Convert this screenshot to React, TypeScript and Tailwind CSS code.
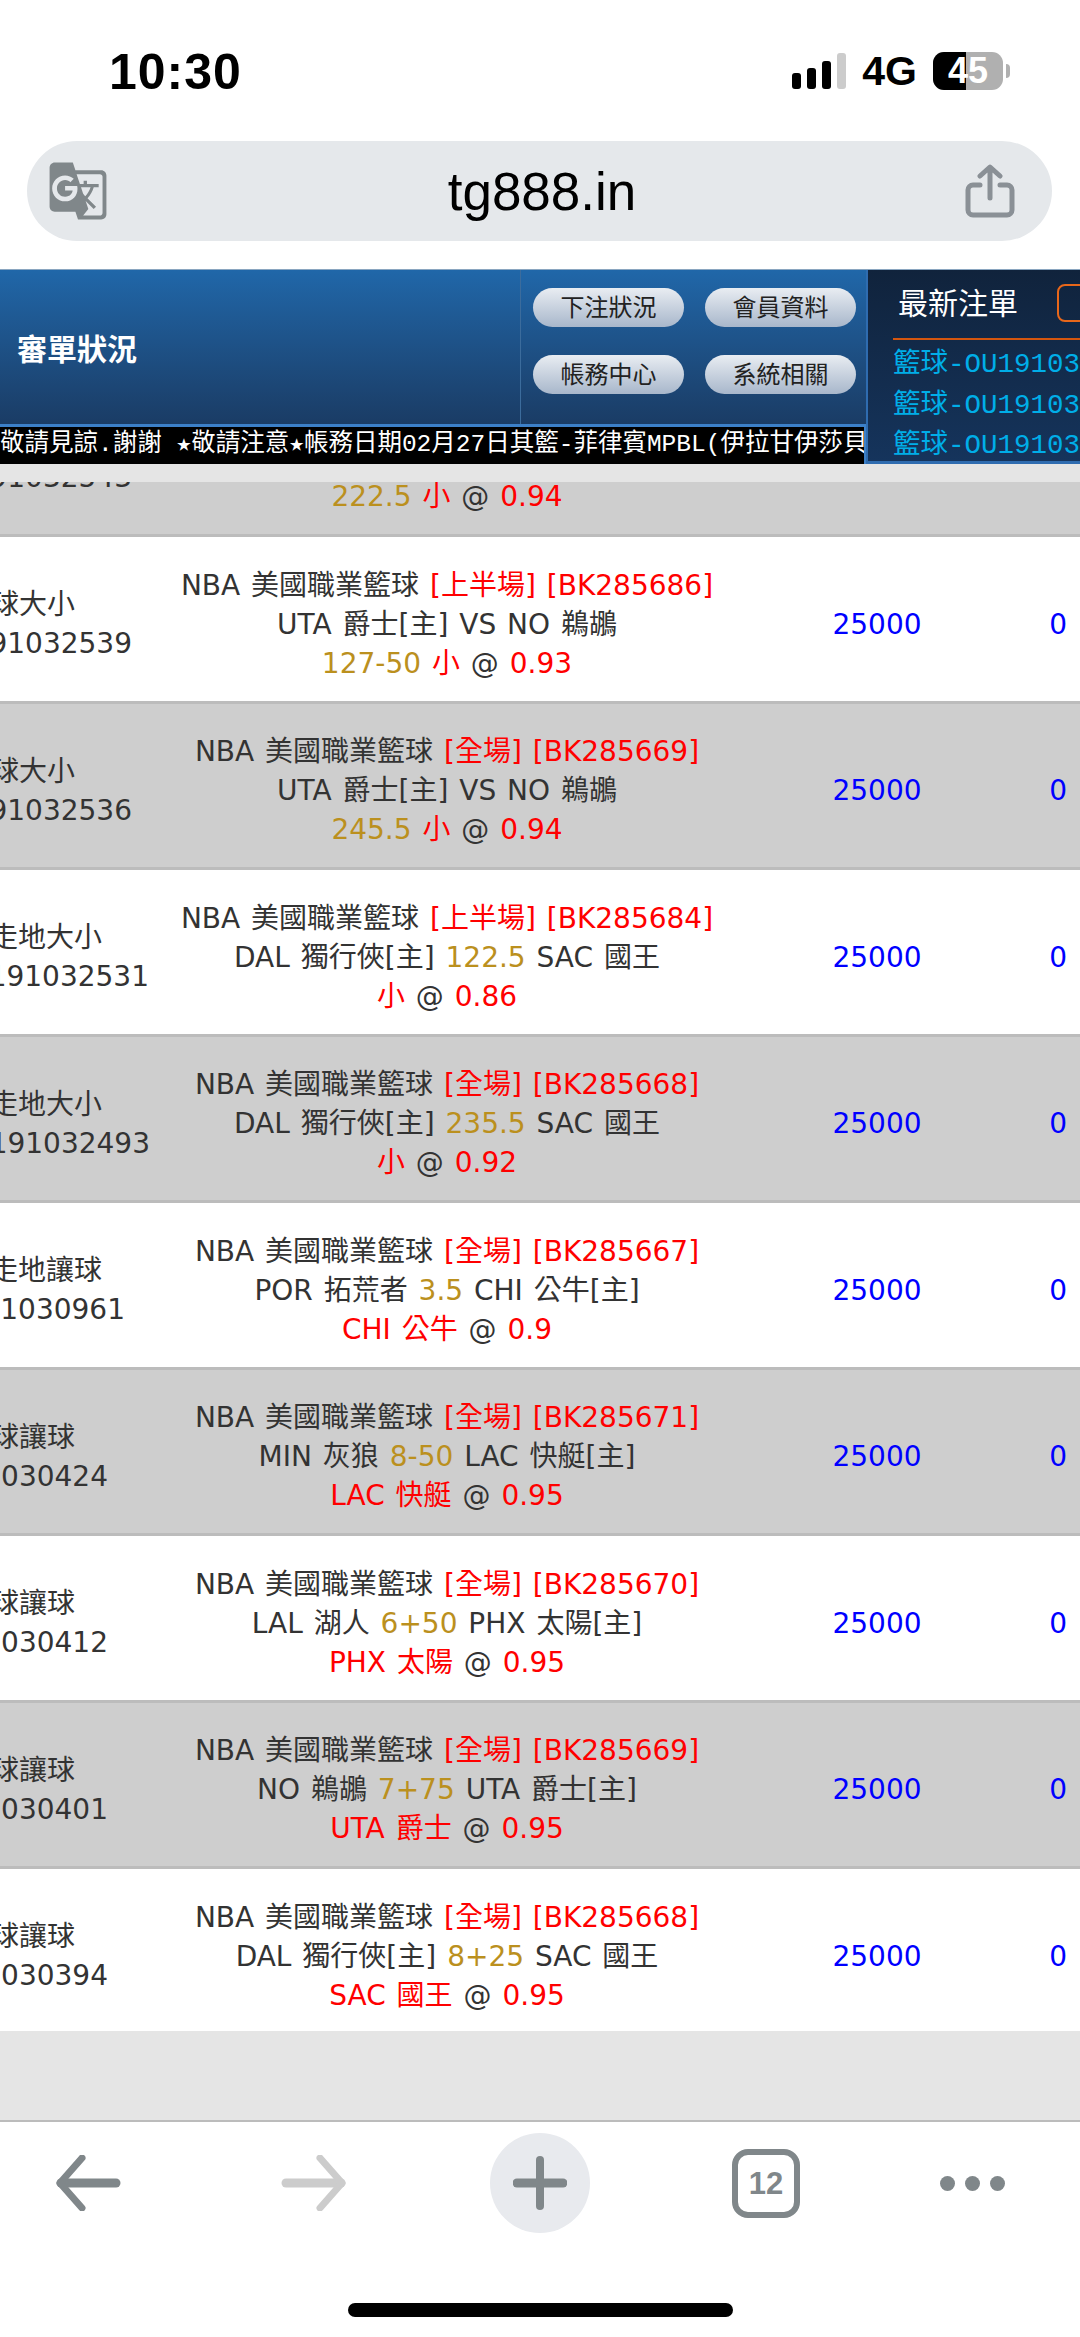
import type { ReactNode } from 'react'
import { MdGTranslate } from 'react-icons/md'

function Red({ children }: { children: ReactNode }) {
  return <span className="text-[#ff0000]">{children}</span>
}

function Gold({ children }: { children: ReactNode }) {
  return <span className="text-[#bb901e]">{children}</span>
}

interface Bet {
  kind: string
  kindPad: string
  id: string
  idPad: string
  period: string
  code: string
  match: ReactNode
  pick: ReactNode
}

const daXiao = 'pr-[75px]'
const zouDi = 'pr-[48px]'
const rangQiu = 'pr-[75px]'

const bets: Bet[] = [
  {
    kind: '籃球大小', kindPad: daXiao, id: '191032543', idPad: 'pr-[18px]', period: '全場', code: 'BK285670',
    match: 'UTA 爵士[主] VS NO 鵜鶘',
    pick: <><Gold>222.5</Gold> <Red>小</Red> @ <Red>0.94</Red></>,
  },
  {
    kind: '籃球大小', kindPad: daXiao, id: '191032539', idPad: 'pr-[18px]', period: '上半場', code: 'BK285686',
    match: 'UTA 爵士[主] VS NO 鵜鶘',
    pick: <><Gold>127-50</Gold> <Red>小</Red> @ <Red>0.93</Red></>,
  },
  {
    kind: '籃球大小', kindPad: daXiao, id: '191032536', idPad: 'pr-[18px]', period: '全場', code: 'BK285669',
    match: 'UTA 爵士[主] VS NO 鵜鶘',
    pick: <><Gold>245.5</Gold> <Red>小</Red> @ <Red>0.94</Red></>,
  },
  {
    kind: '籃球走地大小', kindPad: zouDi, id: 'OU191032531', idPad: 'pr-[1px]', period: '上半場', code: 'BK285684',
    match: <>DAL 獨行俠[主] <Gold>122.5</Gold> SAC 國王</>,
    pick: <><Red>小</Red> @ <Red>0.86</Red></>,
  },
  {
    kind: '籃球走地大小', kindPad: zouDi, id: 'OU191032493', idPad: 'pr-[0px]', period: '全場', code: 'BK285668',
    match: <>DAL 獨行俠[主] <Gold>235.5</Gold> SAC 國王</>,
    pick: <><Red>小</Red> @ <Red>0.92</Red></>,
  },
  {
    kind: '籃球走地讓球', kindPad: zouDi, id: 'R191030961', idPad: 'pr-[25px]', period: '全場', code: 'BK285667',
    match: <>POR 拓荒者 <Gold>3.5</Gold> CHI 公牛[主]</>,
    pick: <><Red>CHI 公牛</Red> @ <Red>0.9</Red></>,
  },
  {
    kind: '籃球讓球', kindPad: rangQiu, id: 'R191030424', idPad: 'pr-[42px]', period: '全場', code: 'BK285671',
    match: <>MIN 灰狼 <Gold>8-50</Gold> LAC 快艇[主]</>,
    pick: <><Red>LAC 快艇</Red> @ <Red>0.95</Red></>,
  },
  {
    kind: '籃球讓球', kindPad: rangQiu, id: 'R191030412', idPad: 'pr-[42px]', period: '全場', code: 'BK285670',
    match: <>LAL 湖人 <Gold>6+50</Gold> PHX 太陽[主]</>,
    pick: <><Red>PHX 太陽</Red> @ <Red>0.95</Red></>,
  },
  {
    kind: '籃球讓球', kindPad: rangQiu, id: 'R191030401', idPad: 'pr-[42px]', period: '全場', code: 'BK285669',
    match: <>NO 鵜鶘 <Gold>7+75</Gold> UTA 爵士[主]</>,
    pick: <><Red>UTA 爵士</Red> @ <Red>0.95</Red></>,
  },
  {
    kind: '籃球讓球', kindPad: rangQiu, id: 'R191030394', idPad: 'pr-[42px]', period: '全場', code: 'BK285668',
    match: <>DAL 獨行俠[主] <Gold>8+25</Gold> SAC 國王</>,
    pick: <><Red>SAC 國王</Red> @ <Red>0.95</Red></>,
  },
]

function BetRow({ bet, shaded }: { bet: Bet; shaded: boolean }) {
  return (
    <div
      className={`grid h-[166.5px] shrink-0 grid-cols-[150px_594px_266px_70px] border-b-[3px] border-[#bcbcbc] pt-[11px] text-[28px] leading-[39px] text-[#333] [word-spacing:2px] ${
        shaded ? 'bg-[#cecece]' : 'bg-white'
      }`}
    >
      <div className="flex flex-col items-end justify-center overflow-hidden whitespace-nowrap">
        <div className={bet.kindPad}>{bet.kind}</div>
        <div className={bet.idPad}>{bet.id}</div>
      </div>
      <div className="flex flex-col items-center justify-center whitespace-nowrap">
        <div>
          NBA 美國職業籃球 <Red>[{bet.period}] [{bet.code}]</Red>
        </div>
        <div>{bet.match}</div>
        <div>{bet.pick}</div>
      </div>
      <div className="flex items-center justify-center text-[#0000ff]">25000</div>
      <div className="flex items-center justify-end pr-[13px] text-[#0000ff]">0</div>
    </div>
  )
}

function NavButton({ label }: { label: string }) {
  return (
    <div className="flex h-[39px] w-[151px] items-center justify-center rounded-full bg-gradient-to-b from-[#e9edf2] to-[#a8b7cb] text-[24px] text-[#222]">
      {label}
    </div>
  )
}

function StatusBar() {
  return (
    <div className="flex h-[141px] shrink-0 items-start justify-between pl-[109px] pr-[70px] pt-[48px]">
      <div className="font-['Liberation_Sans',sans-serif] text-[50px] font-bold leading-[48px] tracking-[1px] text-black">
        10:30
      </div>
      <div className="flex items-center pt-[3px]">
        <div className="flex h-[36px] items-end gap-[6px]">
          <div className="h-[16px] w-[9px] rounded-[3px] bg-black" />
          <div className="h-[21px] w-[9px] rounded-[3px] bg-black" />
          <div className="h-[28px] w-[9px] rounded-[3px] bg-black" />
          <div className="h-[36px] w-[9px] rounded-[3px] bg-[#cccccc]" />
        </div>
        <div className="ml-[16px] font-['Liberation_Sans',sans-serif] text-[41px] font-bold leading-[40px] text-black">4G</div>
        <div className="relative ml-[16px] flex h-[38px] w-[70px] items-center justify-center overflow-hidden rounded-[11px] bg-[#b0b0b0] font-['Liberation_Sans',sans-serif] text-[36px] font-bold leading-none text-white">
          <div className="absolute inset-y-0 left-0 w-[33px] bg-black" />
          <span className="relative">45</span>
        </div>
        <div className="ml-[3px] h-[14px] w-[4px] rounded-r-full bg-[#b0b0b0]" />
      </div>
    </div>
  )
}

function AddressBar() {
  return (
    <div className="mx-[27px] flex h-[100px] w-[1025px] shrink-0 items-center rounded-[50px] bg-[#e5e8eb] pl-[20px] pr-[37px]">
      <MdGTranslate size={62} color="#80878a" />
      <div className="flex-1 pl-[10px] text-center font-['Liberation_Sans',sans-serif] text-[53px] leading-none text-black">
        tg888.in
      </div>
      <svg width="50" height="54" viewBox="0 0 50 54" fill="none" stroke="#8a9096" strokeWidth="5" strokeLinecap="round" strokeLinejoin="round">
        <path d="M15 21H8a5 5 0 0 0-5 5v20a5 5 0 0 0 5 5h34a5 5 0 0 0 5-5V26a5 5 0 0 0-5-5h-7" />
        <path d="M25 34V4M15 12l10-9 10 9" />
      </svg>
    </div>
  )
}

function SiteHeader() {
  return (
    <div className="flex h-[195px] shrink-0 border-t border-[#8aa6c0]">
      <div className="flex w-[866px] shrink-0 flex-col">
        <div className="flex flex-1 bg-gradient-to-b from-[#2067a9] to-[#1a3c65]">
          <div className="flex w-[521px] items-center border-r border-[#3c6c9c] pl-[17px] font-['Noto_Sans_CJK_TC',sans-serif] text-[30px] font-bold text-white">
            審單狀況
          </div>
          <div className="grid flex-1 grid-cols-[151px_151px] content-start gap-x-[21px] gap-y-[28px] pl-[12px] pt-[18px]">
            <NavButton label="下注狀況" />
            <NavButton label="會員資料" />
            <NavButton label="帳務中心" />
            <NavButton label="系統相關" />
          </div>
        </div>
        <div className="h-[40px] overflow-hidden whitespace-nowrap border-t-[3px] border-r-[2px] border-[#3c80c8] bg-black font-['Liberation_Mono','DejaVu_Sans_Mono','Noto_Sans_CJK_TC',monospace] text-[24.5px] leading-[36px] text-white">
          敬請見諒.謝謝 ★敬請注意★帳務日期02月27日其籃-菲律賓MPBL(伊拉甘伊莎貝拉)
        </div>
      </div>
      <div className="flex-1 overflow-hidden border-b-[3px] border-l-[2px] border-[#2f6cb0] bg-gradient-to-b from-[#10233c] to-[#15345c] pl-[25px]">
        <div className="flex h-[70px] items-center border-b-[2px] border-[#d4560f] pb-[7px]">
          <div className="shrink-0 whitespace-nowrap pl-[5px] font-['Noto_Sans_CJK_TC',sans-serif] text-[30px] leading-none text-white">最新注單</div>
          <div className="ml-[39px] mt-[5px] h-[38px] w-[60px] shrink-0 rounded-[8px] border-[2px] border-[#e8671a]" />
        </div>
        <div className="whitespace-nowrap pt-[5px] font-['Liberation_Mono','Noto_Sans_CJK_TC',monospace] text-[27.5px] leading-[40.5px] text-[#00aee8]">
          <div>籃球-OU191032543</div>
          <div>籃球-OU191032539</div>
          <div>籃球-OU191032536</div>
        </div>
      </div>
    </div>
  )
}

function Toolbar() {
  return (
    <div className="flex flex-1 flex-col border-t-[2px] border-[#bcbcbc] bg-white">
      <div className="flex h-[181px] shrink-0 justify-center">
        <div className="flex h-[122px] w-[226px] shrink-0 items-center justify-center">
          <svg width="66" height="56" viewBox="0 0 66 56" fill="none" stroke="#80878a" strokeLinecap="round" strokeLinejoin="round">
            <path d="M61 28H6" strokeWidth="9" />
            <path d="M27 3 5 28l22 25" strokeWidth="7" />
          </svg>
        </div>
        <div className="flex h-[122px] w-[226px] shrink-0 items-center justify-center">
          <svg width="66" height="56" viewBox="0 0 66 56" fill="none" stroke="#cccccc" strokeLinecap="round" strokeLinejoin="round">
            <path d="M5 28h55" strokeWidth="9" />
            <path d="m39 3 22 25-22 25" strokeWidth="7" />
          </svg>
        </div>
        <div className="flex h-[122px] w-[226px] shrink-0 items-center justify-center">
          <div className="flex h-[100px] w-[100px] items-center justify-center rounded-full bg-[#e8eaee]">
            <svg width="54" height="54" viewBox="0 0 54 54" stroke="#80878a" strokeLinecap="round">
              <path d="M4 27h46" strokeWidth="9" />
              <path d="M27 4v46" strokeWidth="8" />
            </svg>
          </div>
        </div>
        <div className="flex h-[122px] w-[226px] shrink-0 items-center justify-center">
          <div className="flex h-[69px] w-[68px] items-center justify-center rounded-[16px] border-[6px] border-[#80878a] font-['Liberation_Sans',sans-serif] text-[31px] font-bold leading-none text-[#80878a]">
            12
          </div>
        </div>
        <div className="flex h-[122px] w-[226px] shrink-0 items-center justify-center gap-[10px] pr-[40px]">
          <div className="h-[15px] w-[15px] rounded-full bg-[#80878a]" />
          <div className="h-[15px] w-[15px] rounded-full bg-[#80878a]" />
          <div className="h-[15px] w-[15px] rounded-full bg-[#80878a]" />
        </div>
      </div>
      <div className="mx-auto h-[14px] w-[385px] rounded-full bg-black" />
    </div>
  )
}

export default function App() {
  return (
    <div className="flex h-[2337px] w-[1080px] flex-col overflow-hidden bg-white font-['DejaVu_Sans','Noto_Sans_CJK_TC',sans-serif]">
      <StatusBar />
      <AddressBar />
      <div className="h-[28px] shrink-0" />
      <SiteHeader />
      <div className="h-[18px] shrink-0 bg-[#e5e5e5]" />
      <div className="flex h-[1638px] shrink-0 flex-col bg-[#e5e5e5]">
        <div className="flex h-[55px] shrink-0 flex-col justify-end overflow-hidden">
          <BetRow bet={bets[0]} shaded />
        </div>
        <div className="h-[1494px] shrink-0 overflow-hidden">
          {bets.slice(1).map((bet, i) => (
            <BetRow key={bet.id} bet={bet} shaded={i % 2 === 1} />
          ))}
        </div>
      </div>
      <Toolbar />
    </div>
  )
}
